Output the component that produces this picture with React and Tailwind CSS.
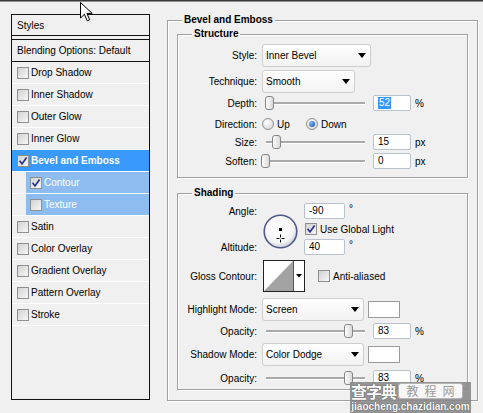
import React from "react";

function CheckBox({ checked }) {
  return (
    <span className="w-[12px] h-[12px] shrink-0 border border-[#8e8f8f] bg-[linear-gradient(135deg,#d2d2d2,#f7f7f7)] flex items-center justify-center">
      {checked && (
        <svg width="10" height="10" viewBox="0 0 10 10">
          <path d="M1.6 4.8 L4 7.9 L8.6 1.4" fill="none" stroke="#25318c" strokeWidth="1.7" />
        </svg>
      )}
    </span>
  );
}

function Radio({ on }) {
  return (
    <span className="w-[12px] h-[12px] shrink-0 rounded-full border border-[#8f8f8f] bg-[radial-gradient(circle_at_40%_35%,#ffffff,#cfcfcf)] flex items-center justify-center">
      {on && <span className="w-[6px] h-[6px] rounded-full bg-[radial-gradient(circle_at_35%_35%,#7dbaff,#0a4aa8)]" />}
    </span>
  );
}

function Label({ children }) {
  return <span className="w-[80px] shrink-0 text-right pr-[1px] whitespace-nowrap">{children}</span>;
}

function Slider({ thumb }) {
  return (
    <div className="relative w-[107px] h-[18px] shrink-0">
      <div className="absolute left-[4px] right-[4px] top-[8px] h-[3px] bg-[#a9a9a9] border-b border-white" />
      <div className={`absolute top-[2px] w-[9px] h-[14px] rounded-[3px] border border-[#858585] bg-[linear-gradient(90deg,#ffffff,#d9d9d9)] ${thumb}`} />
    </div>
  );
}

function NumInput({ value, w, selected }) {
  return (
    <div className={`${w} h-[16px] shrink-0 border border-[#b8c3ce] rounded-[2px] bg-white flex items-center pl-[4px] leading-[12px]`}>
      {selected ? <span className="bg-[#3399ff] text-white px-[1px]">{value}</span> : <span>{value}</span>}
    </div>
  );
}

function Select({ value, w }) {
  return (
    <div className={`${w} h-[23px] shrink-0 border border-[#cdcdcd] rounded-[3px] bg-[linear-gradient(#ffffff,#f2f2f2)] flex items-center justify-between pl-[3px] pr-[4px]`}>
      <span>{value}</span>
      <svg width="8" height="5" viewBox="0 0 8 5">
        <path d="M0 0 H8 L4 5 Z" fill="#000" />
      </svg>
    </div>
  );
}

function Group({ title, className, children }) {
  return (
    <div className={`relative border border-[#a0a0a0] shadow-[inset_1px_1px_0_#ffffff,1px_1px_0_#ffffff] ${className}`}>
      <span className="absolute -top-[8px] left-[14px] px-[2px] bg-[#f0f0f0] font-bold leading-[14px] whitespace-nowrap">{title}</span>
      {children}
    </div>
  );
}

const items = [
  { label: "Drop Shadow" },
  { label: "Inner Shadow" },
  { label: "Outer Glow" },
  { label: "Inner Glow" },
  { label: "Bevel and Emboss", checked: true, kind: "active" },
  { label: "Contour", checked: true, kind: "sub" },
  { label: "Texture", kind: "sub" },
  { label: "Satin" },
  { label: "Color Overlay" },
  { label: "Gradient Overlay" },
  { label: "Pattern Overlay" },
  { label: "Stroke" },
];

function StyleRow({ item }) {
  if (item.kind === "sub") {
    return (
      <div className="h-[22px] border-b border-white pl-[14px]">
        <div className="h-full bg-[#8dbdf0] flex items-center pl-[4px] text-white">
          <CheckBox checked={item.checked} />
          <span className="ml-[2px]">{item.label}</span>
        </div>
      </div>
    );
  }
  if (item.kind === "active") {
    return (
      <div className="h-[22px] border-b border-white bg-[#3a99fd] flex items-center pl-[5px] text-white font-bold">
        <CheckBox checked={item.checked} />
        <span className="ml-[2px]">{item.label}</span>
      </div>
    );
  }
  return (
    <div className="h-[22px] border-b border-white flex items-center pl-[5px]">
      <CheckBox checked={item.checked} />
      <span className="ml-[2px]">{item.label}</span>
    </div>
  );
}

export default function App() {
  return (
    <div className="w-[483px] h-[413px] bg-[#f0f0f0] relative overflow-hidden text-[10px] text-black font-['Liberation_Sans',Arial,sans-serif]">
      <div className="h-[1px] bg-[#3a3a3a]" />
      <div className="h-[1px] bg-[#8e8e8e]" />
      <div className="flex">
        {/* Left styles panel */}
        <div className="ml-[11px] mt-[12px] w-[139px] h-[386px] border border-[#111] flex flex-col">
          <div className="h-[21px] border-b border-[#111] flex items-center pl-[5px]">Styles</div>
          <div className="mt-[3px] h-[23px] border-t border-b border-[#111] flex items-center pl-[5px]">Blending Options: Default</div>
          {items.map((it) => (
            <StyleRow key={it.label} item={it} />
          ))}
        </div>

        {/* Right settings */}
        <Group title="Bevel and Emboss" className="ml-[17px] mt-[18px] w-[311px] h-[381px]">
          <Group title="Structure" className="ml-[9px] mt-[13px] w-[291px] h-[144px]">
            <div className="flex flex-col pt-[9px]">
              <div className="flex items-center h-[23px]">
                <Label>Style:</Label>
                <div className="ml-[4px]"><Select value="Inner Bevel" w="w-[109px]" /></div>
              </div>
              <div className="flex items-center h-[23px] mt-[3px]">
                <Label>Technique:</Label>
                <div className="ml-[4px]"><Select value="Smooth" w="w-[93px]" /></div>
              </div>
              <div className="flex items-center h-[18px] mt-[1px]">
                <Label>Depth:</Label>
                <div className="ml-[4px] flex items-center">
                  <Slider thumb="left-[3px]" />
                  <div className="ml-[4px]"><NumInput value="52" w="w-[38px]" selected /></div>
                  <span className="ml-[4px]">%</span>
                </div>
              </div>
              <div className="flex items-center h-[18px] mt-[3px]">
                <Label>Direction:</Label>
                <div className="ml-[4px] flex items-center">
                  <div className="w-[44px] flex items-center">
                    <Radio />
                    <span className="ml-[3px]">Up</span>
                  </div>
                  <Radio on />
                  <span className="ml-[3px]">Down</span>
                </div>
              </div>
              <div className="flex items-center h-[18px]">
                <Label>Size:</Label>
                <div className="ml-[4px] flex items-center">
                  <Slider thumb="left-[10px]" />
                  <div className="ml-[4px]"><NumInput value="15" w="w-[38px]" /></div>
                  <span className="ml-[4px]">px</span>
                </div>
              </div>
              <div className="flex items-center h-[18px] mt-[1px]">
                <Label>Soften:</Label>
                <div className="ml-[4px] flex items-center">
                  <Slider thumb="-left-[1px]" />
                  <div className="ml-[4px]"><NumInput value="0" w="w-[38px]" /></div>
                  <span className="ml-[4px]">px</span>
                </div>
              </div>
            </div>
          </Group>

          <Group title="Shading" className="ml-[9px] mt-[15px] w-[291px] h-[197px]">
            <div className="flex flex-col pt-[9px]">
              <div className="flex h-[52px]">
                <div className="w-[80px] flex flex-col justify-between shrink-0">
                  <div className="h-[16px] flex items-center justify-end pr-[1px]">Angle:</div>
                  <div className="h-[16px] flex items-center justify-end pr-[1px]">Altitude:</div>
                </div>
                <div className="ml-[5px] mt-[11px] w-[35px] h-[35px]">
                  <svg width="35" height="35" viewBox="0 0 35 35">
                    <defs>
                      <radialGradient id="dial" cx="45%" cy="40%" r="60%">
                        <stop offset="0%" stopColor="#ffffff" />
                        <stop offset="75%" stopColor="#f4f4f6" />
                        <stop offset="100%" stopColor="#c9ccd6" />
                      </radialGradient>
                    </defs>
                    <circle cx="17.5" cy="17.5" r="16.3" fill="url(#dial)" stroke="#4f5b86" strokeWidth="1.6" />
                    <rect x="16" y="14" width="3" height="3" fill="#000" />
                    <path d="M17.5 20.5 V28.5 M13.5 24.5 H21.5" stroke="#000" strokeWidth="1" />
                    <rect x="16.5" y="23.5" width="2" height="2" fill="#fff" />
                  </svg>
                </div>
                <div className="ml-[6px] flex flex-col">
                  <div className="flex h-[16px]">
                    <NumInput value="-90" w="w-[41px]" />
                    <span className="ml-[4px] leading-[12px]">°</span>
                  </div>
                  <div className="mt-[3px] h-[14px] flex items-center pl-[1px]">
                    <CheckBox checked />
                    <span className="ml-[3px]">Use Global Light</span>
                  </div>
                  <div className="mt-[3px] flex h-[16px]">
                    <NumInput value="40" w="w-[41px]" />
                    <span className="ml-[4px] leading-[12px]">°</span>
                  </div>
                </div>
              </div>

              <div className="flex items-center h-[32px] mt-[5px]">
                <Label>Gloss Contour:</Label>
                <div className="ml-[5px] w-[42px] h-[32px] shrink-0">
                  <svg width="42" height="32" viewBox="0 0 42 32">
                    <rect x="0.5" y="0.5" width="41" height="31" fill="#fff" stroke="#222" />
                    <polygon points="1,31 30,1 30,31" fill="#a3a3a3" />
                    <line x1="30.5" y1="1" x2="30.5" y2="31" stroke="#555" />
                    <path d="M33 14 H39 L36 17.5 Z" fill="#000" />
                  </svg>
                </div>
                <div className="ml-[13px] flex items-center">
                  <CheckBox />
                  <span className="ml-[3px]">Anti-aliased</span>
                </div>
              </div>

              <div className="flex items-center h-[23px] mt-[6px]">
                <Label>Highlight Mode:</Label>
                <div className="ml-[4px]"><Select value="Screen" w="w-[102px]" /></div>
                <div className="ml-[4px] w-[32px] h-[17px] border border-[#9a9a9a] bg-white" />
              </div>
              <div className="flex items-center h-[18px] mt-[1px]">
                <Label>Opacity:</Label>
                <div className="ml-[4px] flex items-center">
                  <Slider thumb="left-[82px]" />
                  <div className="ml-[4px]"><NumInput value="83" w="w-[38px]" /></div>
                  <span className="ml-[4px]">%</span>
                </div>
              </div>
              <div className="flex items-center h-[23px] mt-[3px]">
                <Label>Shadow Mode:</Label>
                <div className="ml-[4px]"><Select value="Color Dodge" w="w-[102px]" /></div>
                <div className="ml-[4px] w-[32px] h-[17px] border border-[#9a9a9a] bg-white" />
              </div>
              <div className="flex items-center h-[18px] mt-[3px]">
                <Label>Opacity:</Label>
                <div className="ml-[4px] flex items-center">
                  <Slider thumb="left-[82px]" />
                  <div className="ml-[4px]"><NumInput value="83" w="w-[38px]" /></div>
                  <span className="ml-[4px]">%</span>
                </div>
              </div>
            </div>
          </Group>
        </Group>
      </div>

      {/* Mouse cursor */}
      <svg className="absolute left-[80px] top-[2px]" width="14" height="21" viewBox="0 0 14 21">
        <path d="M0.5 0.5 L0.5 16 L4.4 12.3 L7.2 18.8 L9.7 17.7 L6.9 11.4 L12.2 11.4 Z" fill="#fff" stroke="#000" strokeWidth="1" strokeLinejoin="round" />
      </svg>

      {/* Watermark */}
      <div className="absolute left-[350px] top-[382px] w-[121px] h-[31px] bg-[#8a8a8a]/90 flex flex-col">
        <div className="h-[18px] flex items-center">
          <span className="pl-[1px] whitespace-nowrap text-white font-bold text-[16px] leading-[18px] tracking-[-1px] font-['Noto_Sans_CJK_SC',sans-serif] [text-shadow:0_0_1px_#333]">查字典</span>
          <span className="ml-[2px] w-[65px] h-[16px] shrink-0 whitespace-nowrap rounded-[3px] bg-[#f7f7f7] border border-[#b5b5b5] flex items-center justify-center text-[#9a9a9a] text-[12px] leading-[14px] tracking-[6px] pl-[6px] font-['Noto_Sans_CJK_SC',sans-serif]">教程网</span>
        </div>
        <div className="h-[13px] flex items-center justify-center whitespace-nowrap text-white font-bold text-[10px] leading-[12px] [text-shadow:0_0_1px_#222]">jiaocheng.chazidian.com</div>
      </div>
    </div>
  );
}
